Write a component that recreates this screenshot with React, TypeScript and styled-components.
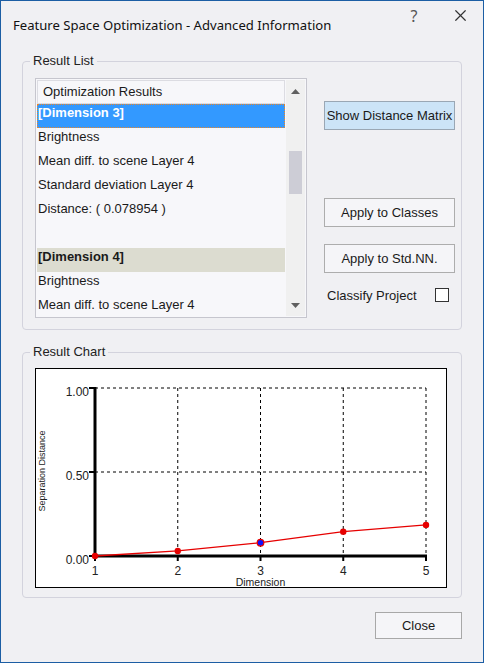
import React from 'react';
import styled, { createGlobalStyle } from 'styled-components';
import { X as XIcon } from 'lucide-react';

const GlobalStyle = createGlobalStyle`
  body {
    margin: 0;
    background: #f0f0f3;
  }
`;

const Window = styled.div`
  width: 484px;
  height: 663px;
  box-sizing: border-box;
  border: 1px solid #1c5ea4;
  background: #f0f0f3;
  display: flex;
  flex-direction: column;
  font-family: "Liberation Sans", Arial, sans-serif;
  font-size: 13px;
  color: #1a1a1a;
  overflow: hidden;
`;

const TitleBar = styled.div`
  height: 44px;
  display: flex;
  align-items: flex-start;
`;

const Title = styled.div`
  flex: 1;
  padding: 14px 0 0 12px;
  font-family: "Noto Sans", "Segoe UI", sans-serif;
  font-size: 13.1px;
  line-height: 20px;
  color: #111;
`;

const TitleButton = styled.div`
  width: 46px;
  height: 29px;
  display: flex;
  align-items: center;
  justify-content: center;
  font-family: "Noto Sans", sans-serif;
  font-size: 16px;
  color: #555;
`;

const Body = styled.div`
  padding: 0 21px;
  display: flex;
  flex-direction: column;
`;

const Group = styled.fieldset<{ $top: number; $padTop: number; $padBottom: number }>`
  margin: ${({ $top }) => $top}px 0 0 0;
  padding: ${({ $padTop }) => $padTop}px 0 ${({ $padBottom }) => $padBottom}px 12px;
  border: 1px solid #d3d3dd;
  border-radius: 4px;
  min-width: 0;
`;

const Legend = styled.legend`
  margin-left: -5px;
  padding: 0 3px;
  font-size: 13px;
  line-height: 16px;
  color: #222;
`;

const ListRow = styled.div`
  display: flex;
  align-items: flex-start;
  gap: 17px;
`;

const ListBox = styled.div`
  width: 272px;
  height: 240px;
  box-sizing: border-box;
  border: 1px solid #c6c6ce;
  background: #f7f7fa;
  padding: 1px;
  display: flex;
`;

const Rows = styled.div`
  flex: 1;
  overflow: hidden;
  display: flex;
  flex-direction: column;
`;

const HeaderCell = styled.div`
  height: 24px;
  flex-shrink: 0;
  box-sizing: border-box;
  border: 1px solid #dcdce2;
  padding-left: 5px;
  line-height: 22px;
  color: #1a1a1a;
`;

const Item = styled.div<{ $variant?: 'selected' | 'group' }>`
  height: 24px;
  flex-shrink: 0;
  box-sizing: border-box;
  padding: 1px 0 0 1px;
  line-height: 16px;
  white-space: nowrap;
  color: #1a1a1a;
  ${({ $variant }) =>
    $variant === 'selected' &&
    `
    background: #3399ff;
    color: #fff;
    font-weight: bold;
    border: 1px dotted #e8862a;
    padding: 0;
  `}
  ${({ $variant }) =>
    $variant === 'group' &&
    `
    background: #dcdcd0;
    font-weight: bold;
  `}
`;

const ScrollBar = styled.div`
  width: 19px;
  margin-left: 1px;
  background: #f0f0f0;
  display: flex;
  flex-direction: column;
`;

const ScrollArrow = styled.div`
  height: 22px;
  display: flex;
  align-items: center;
  justify-content: center;
`;

const ScrollTrack = styled.div`
  flex: 1;
`;

const Thumb = styled.div<{ $offset: number; $size: number }>`
  margin: ${({ $offset }) => $offset}px auto 0;
  width: 13px;
  height: ${({ $size }) => $size}px;
  background: #cdcdd6;
`;

const ButtonColumn = styled.div`
  width: 131px;
  display: flex;
  flex-direction: column;
  padding-top: 23px;
`;

const Button = styled.button<{ $gap?: number; $primary?: boolean }>`
  margin-top: ${({ $gap }) => $gap ?? 0}px;
  height: 29px;
  box-sizing: border-box;
  border: 1px solid ${({ $primary }) => ($primary ? '#9aa7b4' : '#adadad')};
  background: ${({ $primary }) => ($primary ? '#cce4f7' : '#f5f5f8')};
  font-family: "Liberation Sans", Arial, sans-serif;
  font-size: 13px;
  color: #1a1a1a;
  padding: 0;
  white-space: nowrap;
`;

const CheckRow = styled.div`
  margin-top: 15px;
  height: 14px;
  display: flex;
  align-items: center;
  justify-content: space-between;
  padding: 0 6px 0 3px;
`;

const CheckBox = styled.div`
  width: 14px;
  height: 14px;
  box-sizing: border-box;
  border: 1px solid #333;
  background: #fff;
`;

const ChartBox = styled.div`
  width: 412px;
  height: 220px;
  box-sizing: border-box;
  border: 1px solid #000;
  background: #fff;
`;

const Footer = styled.div`
  margin-top: 14px;
  display: flex;
  justify-content: flex-end;
`;

const CloseButton = styled(Button)`
  width: 87px;
  height: 27px;
  border-color: #a8a8a8;
`;

const items: { text: string; variant?: 'selected' | 'group' }[] = [
  { text: '[Dimension 3]', variant: 'selected' },
  { text: 'Brightness' },
  { text: 'Mean diff. to scene Layer 4' },
  { text: 'Standard deviation Layer 4' },
  { text: 'Distance: ( 0.078954 )' },
  { text: '' },
  { text: '[Dimension 4]', variant: 'group' },
  { text: 'Brightness' },
  { text: 'Mean diff. to scene Layer 4' },
];

const values = [0.0, 0.03, 0.079, 0.145, 0.185];
const X0 = 59;
const STEP = 82.75;
const Y0 = 187;
const YH = 168;

const px = (i: number) => X0 + i * STEP;
const py = (v: number) => Y0 - v * YH;

const Chart = () => {
  const font = '"Liberation Sans", Arial, sans-serif';
  const pts = values.map((v, i) => `${px(i)},${py(v)}`).join(' ');
  return (
    <svg width="410" height="218" viewBox="0 0 410 218">
      {[1, 2, 3, 4].map((i) => (
        <line key={i} x1={px(i)} y1={py(1)} x2={px(i)} y2={Y0} stroke="#000" strokeDasharray="3 3" />
      ))}
      {[0.5, 1].map((v) => (
        <line key={v} x1={X0} y1={py(v)} x2={px(4)} y2={py(v)} stroke="#000" strokeDasharray="3 3" />
      ))}
      <line x1={X0} y1={py(1) - 1} x2={X0} y2={Y0 + 1.5} stroke="#000" strokeWidth="3" />
      <line x1={X0} y1={Y0} x2={px(4) + 1} y2={Y0} stroke="#000" strokeWidth="3" />
      {[0, 0.5, 1].map((v) => (
        <g key={v}>
          <line x1={X0 - 6} y1={py(v)} x2={X0} y2={py(v)} stroke="#000" strokeWidth="2" />
          <text x={X0 - 6} y={py(v) + 7.5} textAnchor="end" fontFamily={font} fontSize="12" fill="#222">
            {v.toFixed(2)}
          </text>
        </g>
      ))}
      {values.map((_, i) => (
        <g key={i}>
          <line x1={px(i)} y1={Y0} x2={px(i)} y2={Y0 + 5} stroke="#000" strokeWidth="2" />
          <text x={px(i)} y={205.5} textAnchor="middle" fontFamily={font} fontSize="12" fill="#222">
            {i + 1}
          </text>
        </g>
      ))}
      <text x={px(2)} y={216.5} textAnchor="middle" fontFamily={font} fontSize="10.5" fill="#222">
        Dimension
      </text>
      <text
        x={0}
        y={0}
        transform="translate(8.5 102) rotate(-90)"
        textAnchor="middle"
        fontFamily={font}
        fontSize="9"
        fill="#222"
      >
        Separation Distance
      </text>
      <polyline points={pts} fill="none" stroke="#e60000" strokeWidth="1.3" />
      {values.map((v, i) =>
        i === 2 ? (
          <circle key={i} cx={px(i)} cy={py(v)} r="3.3" fill="#1010ff" stroke="#e60000" strokeWidth="1.2" />
        ) : (
          <circle key={i} cx={px(i)} cy={py(v)} r="3.2" fill="#e60000" />
        )
      )}
    </svg>
  );
};

export default function App() {
  return (
    <>
      <GlobalStyle />
      <Window>
        <TitleBar>
          <Title>Feature Space Optimization - Advanced Information</Title>
          <TitleButton>?</TitleButton>
          <TitleButton>
            <XIcon size={19} strokeWidth={1.5} color="#333" />
          </TitleButton>
        </TitleBar>
        <Body>
          <Group $top={8} $padTop={9} $padBottom={11}>
            <Legend>Result List</Legend>
            <ListRow>
              <ListBox>
                <Rows>
                  <HeaderCell>Optimization Results</HeaderCell>
                  {items.map((it, i) => (
                    <Item key={i} $variant={it.variant}>
                      {it.text}
                    </Item>
                  ))}
                </Rows>
                <ScrollBar>
                  <ScrollArrow>
                    <svg width="9" height="5" viewBox="0 0 9 5">
                      <path d="M4.5 0 L9 5 L0 5 Z" fill="#606060" />
                    </svg>
                  </ScrollArrow>
                  <ScrollTrack>
                    <Thumb $offset={49} $size={43} />
                  </ScrollTrack>
                  <ScrollArrow>
                    <svg width="9" height="5" viewBox="0 0 9 5">
                      <path d="M0 0 L9 0 L4.5 5 Z" fill="#606060" />
                    </svg>
                  </ScrollArrow>
                </ScrollBar>
              </ListBox>
              <ButtonColumn>
                <Button $primary>Show Distance Matrix</Button>
                <Button $gap={68}>Apply to Classes</Button>
                <Button $gap={17}>Apply to Std.NN.</Button>
                <CheckRow>
                  <span>Classify Project</span>
                  <CheckBox />
                </CheckRow>
              </ButtonColumn>
            </ListRow>
          </Group>
          <Group $top={14} $padTop={8} $padBottom={9}>
            <Legend>Result Chart</Legend>
            <ChartBox>
              <Chart />
            </ChartBox>
          </Group>
          <Footer>
            <CloseButton>Close</CloseButton>
          </Footer>
        </Body>
      </Window>
    </>
  );
}
